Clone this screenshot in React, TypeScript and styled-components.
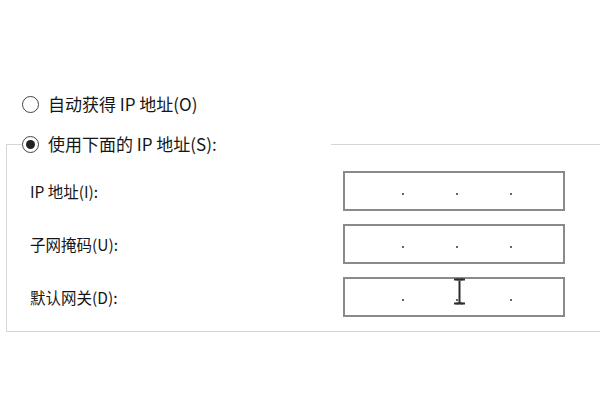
import React from "react";
import styled, { createGlobalStyle } from "styled-components";

const Global = createGlobalStyle`
  html, body { margin: 0; padding: 0; background: #ffffff; }
  body {
    width: 600px; height: 400px; overflow: hidden;
    font-family: "Noto Sans CJK SC", "Noto Sans", sans-serif;
    color: #161616;
  }
`;

const Page = styled.div`
  padding-top: 95px;
  width: 600px;
`;

const RadioRow = styled.label<{ $legend?: boolean }>`
  display: flex;
  align-items: center;
  height: 18px;
  gap: 9px;
  font-size: 17px;
  line-height: 18px;
  padding-left: ${(p) => (p.$legend ? "0" : "22px")};
  white-space: nowrap;
`;

const Circle = styled.span<{ $checked?: boolean }>`
  box-sizing: border-box;
  width: 17px;
  height: 17px;
  border-radius: 50%;
  border: 1.6px solid #444;
  background: #fff;
  display: flex;
  align-items: center;
  justify-content: center;
  flex: 0 0 auto;
  &::after {
    content: "";
    display: ${(p) => (p.$checked ? "block" : "none")};
    width: 9px;
    height: 9px;
    border-radius: 50%;
    background: #222;
  }
`;

const Group = styled.fieldset`
  margin: 22px 0 0 6px;
  padding: 0;
  border: 1px solid #d6d6d6;
  border-right: none;
  min-width: 0;
`;

const Legend = styled.legend`
  margin-left: 15px;
  padding: 0;
  width: 309px;
`;

const Rows = styled.div`
  display: grid;
  grid-template-columns: 313px 222px;
  row-gap: 13px;
  padding: 18px 0 14px 23px;
  align-items: center;
`;

const Label = styled.span`
  font-size: 15.5px;
  color: #161616;
  white-space: nowrap;
`;

const IpBox = styled.div`
  position: relative;
  box-sizing: border-box;
  height: 40px;
  border: 2px solid #8a8a8a;
  background: #fff;
  display: flex;
  align-items: center;
  padding-left: 5px;
`;

const Segment = styled.span`
  flex: 0 0 52px;
`;

const Dot = styled.span`
  flex: 0 0 2px;
  height: 2px;
  margin-top: 6px;
  background: #333;
  border-radius: 1px;
`;

const Cursor = styled.svg`
  position: absolute;
  left: 108px;
  top: -1px;
  width: 13px;
  height: 28px;
`;

function IpField({ cursor }: { cursor?: boolean }) {
  return (
    <IpBox>
      <Segment />
      <Dot />
      <Segment />
      <Dot />
      <Segment />
      <Dot />
      <Segment />
      {cursor && (
        <Cursor viewBox="0 0 13 28">
          <path d="M1 1.5h4.5M7.5 1.5H12M6.5 2.5v22.5M1 25.5h4.5M7.5 25.5H12" stroke="#2c2c2c" strokeWidth="2" fill="none" />
          <path d="M3.5 1.5h6M3.5 25.5h6" stroke="#2c2c2c" strokeWidth="2" fill="none" />
        </Cursor>
      )}
    </IpBox>
  );
}

export default function App() {
  return (
    <>
      <Global />
      <Page>
        <RadioRow>
          <Circle />
          <span>自动获得 IP 地址(O)</span>
        </RadioRow>
        <Group>
          <Legend>
            <RadioRow $legend>
              <Circle $checked />
              <span>使用下面的 IP 地址(S):</span>
            </RadioRow>
          </Legend>
          <Rows>
            <Label>IP 地址(I):</Label>
            <IpField />
            <Label>子网掩码(U):</Label>
            <IpField />
            <Label>默认网关(D):</Label>
            <IpField cursor />
          </Rows>
        </Group>
      </Page>
    </>
  );
}
